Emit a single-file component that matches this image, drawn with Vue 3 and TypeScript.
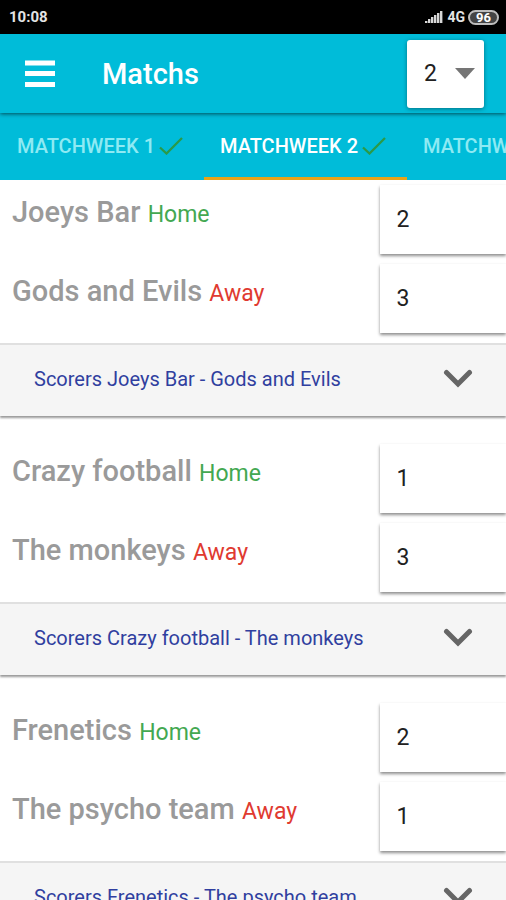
<script setup lang="ts">
import { ref } from 'vue'

interface Side {
  team: string
  venue: 'Home' | 'Away'
  score: string
}

interface Match {
  id: number
  sides: Side[]
}

const group = ref('2')
const activeWeek = ref(2)

const weeks = [
  { number: 1, done: true },
  { number: 2, done: true },
  { number: 3, done: false },
]

const signalBars = [2, 4, 6, 8, 10, 12]

const matches = ref<Match[]>([
  {
    id: 1,
    sides: [
      { team: 'Joeys Bar', venue: 'Home', score: '2' },
      { team: 'Gods and Evils', venue: 'Away', score: '3' },
    ],
  },
  {
    id: 2,
    sides: [
      { team: 'Crazy football', venue: 'Home', score: '1' },
      { team: 'The monkeys', venue: 'Away', score: '3' },
    ],
  },
  {
    id: 3,
    sides: [
      { team: 'Frenetics', venue: 'Home', score: '2' },
      { team: 'The psycho team', venue: 'Away', score: '1' },
    ],
  },
])
</script>

<template>
  <div class="screen">
    <div class="status">
      <span class="clock">10:08</span>
      <div class="indicators">
        <svg class="signal" width="20" height="14" viewBox="0 0 20 14" aria-hidden="true">
          <rect
            v-for="(bar, i) in signalBars"
            :key="bar"
            :x="1 + i * 3"
            :y="13 - bar"
            width="2.4"
            :height="bar"
            fill="#d8d8d8"
          />
        </svg>
        <span class="network">4G</span>
        <span class="battery">96</span>
      </div>
    </div>

    <header class="toolbar">
      <button class="menu" type="button" aria-label="Menu">
        <svg width="30" height="28" viewBox="0 0 30 28" aria-hidden="true">
          <path d="M0 3h30M0 13.5h30M0 24.500h30" stroke="#fff" stroke-width="5" />
        </svg>
      </button>
      <h1 class="title">Matchs</h1>
      <div class="picker">
        <select v-model="group" class="picker-select" aria-label="Group">
          <option>1</option>
          <option>2</option>
          <option>3</option>
        </select>
        <svg class="picker-arrow" width="20" height="11" viewBox="0 0 20 11" aria-hidden="true">
          <path d="M0 0h20L10 11z" fill="#757575" />
        </svg>
      </div>
    </header>

    <nav class="tabs">
      <button
        v-for="week in weeks"
        :key="week.number"
        class="tab"
        :class="{ active: week.number === activeWeek }"
        type="button"
        @click="activeWeek = week.number"
      >
        Matchweek {{ week.number }}
        <svg v-if="week.done" width="24" height="18" viewBox="0 0 24 18" aria-hidden="true">
          <path d="M1 10.500L7.500 16.500L23 1" fill="none" stroke="#2a9a48" stroke-width="2.300" />
        </svg>
      </button>
    </nav>

    <main class="matches">
      <section v-for="match in matches" :key="match.id" class="match">
        <div v-for="side in match.sides" :key="side.venue" class="side">
          <label class="team" :for="`score-${match.id}-${side.venue}`">
            {{ side.team }}
            <span class="venue" :class="side.venue.toLowerCase()">{{ side.venue }}</span>
          </label>
          <input
            :id="`score-${match.id}-${side.venue}`"
            v-model="side.score"
            class="score"
            type="text"
            inputmode="numeric"
          />
        </div>
        <button class="scorers" type="button">
          <span>Scorers {{ match.sides[0].team }} - {{ match.sides[1].team }}</span>
          <svg width="30" height="20" viewBox="0 0 30 20" aria-hidden="true">
            <path
              d="M3.500 3.500L15 15L26.500 3.500"
              fill="none"
              stroke="#666"
              stroke-width="5"
              stroke-linecap="round"
            />
          </svg>
        </button>
      </section>
    </main>
  </div>
</template>

<style>
body {
  background: #fff;
}
</style>

<style scoped>
.screen {
  display: flex;
  flex-direction: column;
  height: 100vh;
  overflow: hidden;
  background: #fff;
  font-family: Roboto, 'Liberation Sans', sans-serif;
}

button,
input,
select {
  box-sizing: border-box;
  margin: 0;
  border: 0;
  border-radius: 0;
  font-family: inherit;
}

.status {
  display: flex;
  flex: none;
  align-items: center;
  justify-content: space-between;
  height: 34px;
  padding: 0 7px 0 9px;
  background: #000;
  color: #e4e4e4;
  font-weight: 700;
}

.clock {
  font-size: 15px;
}

.indicators {
  display: flex;
  align-items: center;
  gap: 3px;
}

.network {
  font-size: 14px;
}

.battery {
  box-sizing: border-box;
  width: 31px;
  height: 15px;
  border: 2px solid #bdbdbd;
  border-radius: 8px;
  background: #444;
  color: #fff;
  font-size: 13px;
  line-height: 11px;
  text-align: center;
}

.toolbar {
  position: relative;
  display: flex;
  flex: none;
  align-items: center;
  height: 79px;
  padding: 0 22px 0 25px;
  box-sizing: border-box;
  background: #00bcd9;
  box-shadow: 0 1px 4px rgba(0, 0, 0, 0.6);
}

.menu {
  display: flex;
  padding: 0;
  background: none;
}

.title {
  flex: 1;
  margin: 0 0 0 47px;
  color: #fff;
  font-size: 29px;
  font-weight: 500;
}

.picker {
  display: grid;
  align-items: center;
  width: 77px;
  height: 68px;
  border-radius: 3px;
  background: #fff;
  box-shadow: 0 1px 4px rgba(0, 0, 0, 0.4);
}

.picker-select {
  grid-area: 1 / 1;
  width: 100%;
  height: 100%;
  padding: 0 0 0 17px;
  appearance: none;
  background: none;
  color: #212121;
  font-size: 23px;
}

.picker-arrow {
  grid-area: 1 / 1;
  justify-self: end;
  margin-right: 9px;
  pointer-events: none;
}

.tabs {
  display: flex;
  flex: none;
  height: 67px;
  padding-left: 1px;
  overflow: hidden;
  background: #00bcd9;
}

.tab {
  display: flex;
  flex: none;
  align-items: center;
  gap: 4px;
  width: 203px;
  padding: 2px 0 0 16px;
  border-bottom: 3px solid transparent;
  background: none;
  color: #8eeaf3;
  font-size: 20px;
  font-weight: 500;
  text-transform: uppercase;
  white-space: nowrap;
}

.tab.active {
  border-bottom-color: #e8a317;
  color: #fff;
}

.matches {
  flex: 1;
  min-height: 0;
  overflow: hidden;
}

.match {
  padding: 5px 0 23px;
}

.side {
  display: flex;
  align-items: flex-start;
  height: 79px;
}

.team {
  flex: 1;
  padding: 10px 0 0 12px;
  color: #9a9a9a;
  font-size: 29px;
  font-weight: 500;
  line-height: 34px;
  white-space: nowrap;
}

.venue {
  font-size: 23px;
  font-weight: 400;
}

.home {
  color: #43a851;
}

.away {
  color: #e03a30;
}

.score {
  width: 25%;
  height: 69px;
  padding: 0 0 0 17px;
  background: #fff;
  box-shadow: 0 2px 3px rgba(0, 0, 0, 0.45);
  color: #212121;
  font-size: 23px;
}

.scorers {
  display: flex;
  align-items: center;
  justify-content: space-between;
  width: 100%;
  height: 73px;
  padding: 0 33px 4px 34px;
  border-top: 2px solid #e0e0e0;
  background: #f5f5f5;
  box-shadow: 0 2px 2px rgba(0, 0, 0, 0.4);
  color: #303f9f;
  font-size: 20px;
  text-align: left;
}
</style>
